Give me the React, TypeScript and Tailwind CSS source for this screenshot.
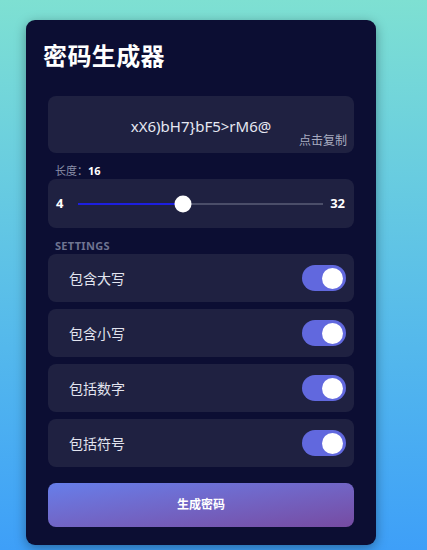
const options = ["包含大写", "包含小写", "包括数字", "包括符号"];
const password = "xX6)bH7}bF5>rM6@";

function Toggle() {
  return (
    <div className="flex h-[26px] w-[44px] items-center justify-end rounded-full bg-[#6168de] pr-[3px]">
      <div className="h-[21px] w-[21px] rounded-full bg-white" />
    </div>
  );
}

function Slider({ min, max, value }: { min: number; max: number; value: number }) {
  const pct = ((value - min) / (max - min)) * 100;
  return (
    <div className="flex h-[49px] items-center rounded-lg bg-[#1f2141] pl-[8px] pr-[9px]">
      <span className="w-[22px] text-[13px] font-bold text-white">{min}</span>
      <div className="relative h-[2px] flex-1 bg-[#4b4e69]">
        <div className="h-full bg-[#1d1fe0]" style={{ width: `${pct}%` }} />
        <div
          className="absolute top-1/2 h-[17px] w-[17px] -translate-x-1/2 -translate-y-1/2 rounded-full bg-white"
          style={{ left: `${pct}%` }}
        />
      </div>
      <span className="ml-[7px] text-[13px] font-bold text-white">{max}</span>
    </div>
  );
}

export default function App() {
  return (
    <div
      className="min-h-[550px] bg-gradient-to-b from-[#7ee0d2] to-[#3e9ff8] pt-[20px] pl-[26px]"
      style={{ fontFamily: '"Noto Sans", "Noto Sans CJK SC", sans-serif' }}
    >
      <div className="w-[350px] rounded-[9px] bg-[#0c0e33] px-[22px] pt-[20px] pb-[18px] shadow-[0_3px_12px_rgba(0,0,0,0.35)]">
        <h1 className="-ml-[5px] text-[24px] font-bold leading-[32px] tracking-[0.4px] text-white">密码生成器</h1>

        <div className="relative mt-[24px] flex h-[57px] items-center justify-center rounded-lg bg-[#1f2141] pt-[3px]">
          <span className="text-[15px] text-[#e6e8f2]">{password}</span>
          <span className="absolute right-[7px] bottom-[3px] text-[12px] text-[#a9acc0]">点击复制</span>
        </div>

        <div className="mt-[10px] px-[7px] text-[11px] leading-[16px]">
          <span className="text-[#8a8ea8]">长度：</span>
          <span className="font-bold text-white">16</span>
        </div>
        <Slider min={4} max={32} value={16} />

        <div className="mt-[10px] px-[7px] text-[11px] font-bold leading-[16px] tracking-[0.3px] text-[#6f7491]">
          SETTINGS
        </div>
        <div className="flex flex-col gap-[7px]">
          {options.map((label) => (
            <div
              key={label}
              className="flex h-[48px] items-center justify-between rounded-lg bg-[#1f2141] pl-[21px] pr-[8px]"
            >
              <span className="text-[14px] text-[#e2e4ef]">{label}</span>
              <Toggle />
            </div>
          ))}
        </div>

        <button className="mt-[16px] flex h-[44px] w-full items-center justify-center rounded-lg bg-gradient-to-br from-[#667eea] to-[#764ba2] text-[12px] font-bold text-white">
          生成密码
        </button>
      </div>
    </div>
  );
}
